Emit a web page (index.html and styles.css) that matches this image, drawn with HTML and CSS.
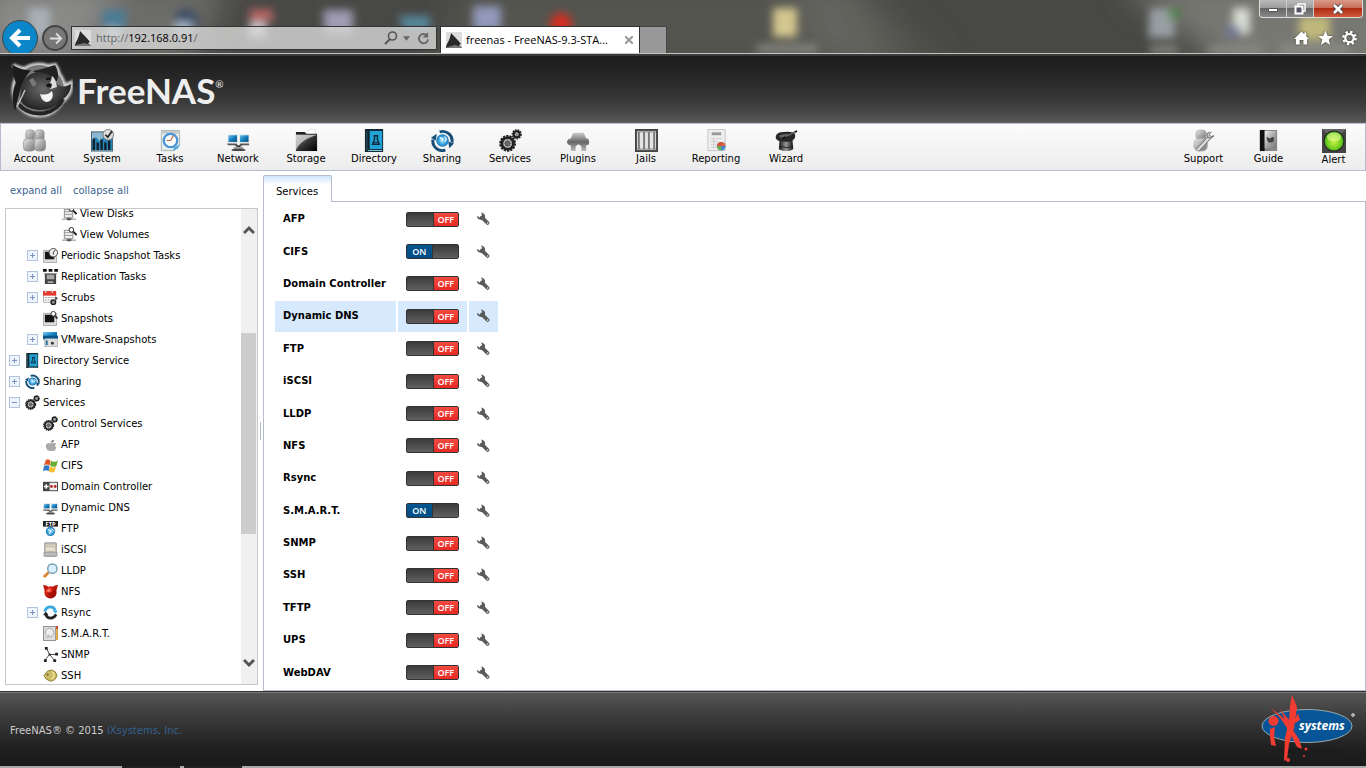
FILE: index.html
```html
<!DOCTYPE html>
<html lang="en">
<head>
<meta charset="utf-8">
<title>freenas - FreeNAS-9.3-STABLE</title>
<link rel="stylesheet" href="styles.css">
</head>
<body>
<svg class="defs" aria-hidden="true">
  <defs>
    <linearGradient id="silver" x1="0" y1="0" x2="1" y2="1"><stop offset="0" stop-color="#eee"/><stop offset=".5" stop-color="#aaa"/><stop offset="1" stop-color="#777"/></linearGradient>
    <linearGradient id="screen" x1="0" y1="0" x2="1" y2="1"><stop offset="0" stop-color="#7cc8f2"/><stop offset=".5" stop-color="#1580c0"/><stop offset="1" stop-color="#0a4670"/></linearGradient>
    <linearGradient id="coal" x1="0" y1="0" x2="1" y2="1"><stop offset="0" stop-color="#aaa"/><stop offset=".5" stop-color="#333"/><stop offset="1" stop-color="#000"/></linearGradient>
    <linearGradient id="plug" x1="0" y1="0" x2="0" y2="1"><stop offset="0" stop-color="#ccc"/><stop offset=".5" stop-color="#666"/><stop offset="1" stop-color="#bbb"/></linearGradient>
    <linearGradient id="hat" x1="0" y1="0" x2="1" y2="0"><stop offset="0" stop-color="#111"/><stop offset=".5" stop-color="#999"/><stop offset="1" stop-color="#111"/></linearGradient>
    <radialGradient id="lamp" cx=".5" cy=".55" r=".6"><stop offset="0" stop-color="#c8f040"/><stop offset=".6" stop-color="#70d020"/><stop offset="1" stop-color="#2a8a18"/></radialGradient>
    <radialGradient id="globe"><stop offset="0" stop-color="#c5ecff"/><stop offset=".6" stop-color="#3aa5df"/><stop offset="1" stop-color="#1c76b5"/></radialGradient>
    <radialGradient id="skin" cx=".45" cy=".45" r=".6"><stop offset="0" stop-color="#6a6a6a"/><stop offset=".6" stop-color="#3c3c3c"/><stop offset="1" stop-color="#1c1c1c"/></radialGradient>
    <radialGradient id="devil" cx=".35" cy=".35" r=".7"><stop offset="0" stop-color="#ff9080"/><stop offset=".4" stop-color="#e02010"/><stop offset="1" stop-color="#8c0800"/></radialGradient>
  </defs>
  <symbol id="shark" viewBox="0 0 16 16"><path d="M0 15C1 11 4 8 5 1C8 4 12 8 15 12L13 13L16 16H0Z" fill="#292929"/><path d="M1 15L9 13L16 15V16H0Z" fill="#777"/></symbol>
  <symbol id="account" viewBox="0 0 24 24"><g fill="url(#silver)" stroke="#888" stroke-width=".7"><rect x="3" y="1" width="9" height="11" rx="3"/><rect x="13" y="1" width="9" height="11" rx="3"/><rect x="0.5" y="10" width="12" height="13" rx="4"/><rect x="12" y="10" width="11.500" height="13" rx="4"/></g></symbol>
  <symbol id="system" viewBox="0 0 24 24"><rect x=".5" y="3" width="22" height="20" fill="#8db8d1" stroke="#46606e"/><path d="M1 12L5 8L9 13L14 7L18 12L22 10V22H1Z" fill="#2786b9"/><path d="M3 22V10M7 22V14M11 22V11M15 22V14M19 22V12" stroke="#12202b" stroke-width="2.500"/><circle cx="18" cy="6" r="5.500" fill="#ddd" stroke="#777"/><path d="M15 6L17.500 8.500L22 2" fill="none" stroke="#222" stroke-width="1.800"/></symbol>
  <symbol id="tasks" viewBox="0 0 24 24"><path d="M2.500 1.500H21.500V17L16 22.500H2.500Z" fill="#e8eeee" stroke="#aab4b4"/><path d="M2 2H22V5H2Z" fill="#c5cccc"/><circle cx="12" cy="12" r="7" fill="#fff" stroke="#4a94d5" stroke-width="2.400"/><path d="M12 12L15 7M12 12H8" stroke="#b5623a" stroke-width="1.300"/><path d="M22 16L20 20L14 23L16 19Z" fill="#55a6d7"/></symbol>
  <symbol id="network" viewBox="0 0 24 24"><rect x="1" y="6" width="10" height="8" fill="url(#screen)" stroke="#eee"/><rect x="13" y="6" width="10" height="8" fill="url(#screen)" stroke="#eee"/><path d="M0 15H10L12 18H9L8 17H1ZM14 15H23V17H16L15 18H12Z" fill="#555"/><path d="M7 19H17V23H7Z" fill="#888"/><path d="M5 22H19M10 18H14" stroke="#333" stroke-width="1.500"/></symbol>
  <symbol id="storage" viewBox="0 0 24 24"><path d="M12 4L14 1L21 0V6H12Z" fill="#fff" stroke="#ccc" stroke-width=".6"/><path d="M1 3H10L12 5H23V23H1Z" fill="#222"/><path d="M1 6H23V23H1Z" fill="url(#coal)"/><path d="M1 6H23C14 9 5 13 1 22Z" fill="#ddd" opacity=".75"/></symbol>
  <symbol id="directory" viewBox="0 0 24 24"><path d="M2 0H21V24H2Z" fill="#10252f"/><path d="M7 2H20V21H7Z" fill="#22a3d5"/><path d="M5 22H20V23H5Z" fill="#8dd2ea"/><path d="M4 2V22" stroke="#35586a"/><path d="M11 7H16M12 7V11L10 16H17L15 11V7" fill="none" stroke="#102b3d" stroke-width="1.500"/><path d="M11 14H16" stroke="#102b3d"/></symbol>
  <symbol id="sharing" viewBox="0 0 24 24"><circle cx="12" cy="12" r="6.500" fill="url(#globe)"/><path d="M9 9L12 10L11 12M14 8L16 10L15 13" fill="none" stroke="#fff" stroke-width="1.200"/><path d="M9 3A10 10 0 0 1 22 14M15 22A10 10 0 0 1 2 11" fill="none" stroke="#154f78" stroke-width="3"/><path d="M0 9L6 5L5 12ZM24 15L19 20L18 13Z" fill="#154f78"/></symbol>
  <symbol id="gears" viewBox="0 0 24 24"><g fill="none" stroke="#222"><circle cx="9" cy="15" r="7.800" stroke-width="2" stroke-dasharray="2.400 1.100"/><circle cx="9" cy="15" r="6" stroke-width="3"/><circle cx="9" cy="15" r="2" stroke-width="1.500"/><path d="M9 11V19M5 15H13M6 12L12 18M12 12L6 18" stroke="#555"/><circle cx="18.500" cy="5.500" r="4.500" stroke-width="1.700" stroke-dasharray="1.700 1"/><circle cx="18.500" cy="5.500" r="3" stroke-width="2.400"/></g><circle cx="9" cy="15" r="4.500" fill="#777" opacity=".5"/><circle cx="18.500" cy="5.500" r="2" fill="#999"/></symbol>
  <symbol id="plugins" viewBox="0 0 24 24"><path d="M6 5Q6 4 8 4H16Q18 4 18 5L20 10H22Q24 13 23 16Q22 17 20 17V23H15V18L12 16L9 18V23H4V17Q1 17 0 14Q0 11 3 10H4Z" fill="url(#plug)"/></symbol>
  <symbol id="jails" viewBox="0 0 24 24"><rect x="1" y="1" width="22" height="22" fill="#e4e4e4" stroke="#444" stroke-width="2"/><path d="M2 3H22M2 21H22" stroke="#999" stroke-width="1.500"/><path d="M4 3V21M9.500 3V21M14.500 3V21M20 3V21" stroke="#777" stroke-width="2"/></symbol>
  <symbol id="reporting" viewBox="0 0 24 24"><path d="M3 .500H21V22.500H3Z" fill="#eee" stroke="#c5c5c5"/><path d="M7 5H17" stroke="#999" stroke-width="3"/><path d="M6 10H18M6 13H14M6 16H13M6 19H13M9 9V20" stroke="#d0d0d0"/><circle cx="17" cy="18" r="4.500" fill="#3488d8"/><path d="M17 18V13.500A4.500 4.500 0 0 0 12.500 18Z" fill="#e34b2c"/><path d="M17 18V13.500A4.500 4.500 0 0 1 21.500 18Z" fill="#e3623c"/><path d="M17 18H12.500A4.500 4.500 0 0 0 17 22.500Z" fill="#69b44b"/></symbol>
  <symbol id="wizard" viewBox="0 0 24 24"><path d="M5 9H18L19 21Q12 25 4 21Z" fill="url(#hat)"/><path d="M1 7Q2 3 9 3Q20 2 21 6Q22 11 16 13Q7 14 3 12Q0 10 1 7Z" fill="#282828"/><path d="M4 7Q10 4 18 6Q14 9 6 9Z" fill="#666"/><path d="M5 18Q12 21 19 18" stroke="#222" fill="none"/><path d="M8 10L23 2" stroke="#111" stroke-width="1.800"/><path d="M11 8L21 3" stroke="#ccc" stroke-width=".7"/></symbol>
  <symbol id="support" viewBox="0 0 24 24"><g fill="url(#silver)" stroke="#aaa" stroke-width=".7"><rect x="4" y="1" width="11" height="10" rx="4"/><rect x="2" y="10" width="14" height="13" rx="5"/></g><path d="M6 22L19 8" stroke="#666" stroke-width="4"/><path d="M6 22L19 8" stroke="#ddd" stroke-width="2.500"/><path d="M18 3Q14 5 17 9Q20 11 23 7L20 8L18 6L20 3" fill="#ccc" stroke="#666"/></symbol>
  <symbol id="guide" viewBox="0 0 24 24"><path d="M3 1H21V23H3Z" fill="#888"/><path d="M3 1H8V23H3Z" fill="#111"/><path d="M8 2H20V20H8Z" fill="url(#silver)"/><path d="M10 8L13 10L17 8Q19 12 16 14H12Q10 12 10 8Z" fill="#444"/></symbol>
  <symbol id="alert" viewBox="0 0 24 24"><rect width="24" height="24" fill="#444"/><path d="M0 0H24L20 4H4Z" fill="#666"/><circle cx="12" cy="12" r="10.500" fill="#222"/><circle cx="12" cy="12" r="9.500" fill="url(#lamp)"/><ellipse cx="12" cy="8" rx="7" ry="4.500" fill="#eaff9a" opacity=".6"/></symbol>
  <symbol id="disk" viewBox="0 0 16 16"><path d="M2.500 3.500H11.500V12.500H2.500Z" fill="#eee" stroke="#888"/><path d="M3 6H11M3 9H11" stroke="#999"/><path d="M0 14H15M7.500 12V16" stroke="#888"/><path d="M5 14H10" stroke="#555" stroke-width="2"/><circle cx="10" cy="3" r="2.500" fill="#fff" stroke="#222"/><path d="M12 5L15.500 8.500" stroke="#222" stroke-width="2"/></symbol>
  <symbol id="snap" viewBox="0 0 16 16"><path d="M.5 2.500H14.500V15.500H.5Z" fill="#ddd" stroke="#aaa"/><path d="M2 4H12V12H2Z" fill="#181414"/></symbol>
  <symbol id="periodic" viewBox="0 0 16 16"><use href="#snap"/><circle cx="11" cy="5" r="4.500" fill="#eee" stroke="#444"/><path d="M11 5L13 2M11 5V7" stroke="#222"/></symbol>
  <symbol id="snapshot" viewBox="0 0 16 16"><use href="#snap"/><circle cx="11" cy="3" r="2.500" fill="#fff" stroke="#333"/><path d="M12.500 5L15.500 8" stroke="#333" stroke-width="2"/></symbol>
  <symbol id="replication" viewBox="0 0 16 16"><path d="M0 0H4V3H0ZM6 0H10V3H6ZM12 0H16V3H12Z" fill="#111"/><path d="M2 5H14V16H2Z" fill="#444"/><path d="M4 6H12V11H4ZM5 13H11V15H5Z" fill="#aaa"/><path d="M1 5H15" stroke="#888"/></symbol>
  <symbol id="scrubs" viewBox="0 0 16 16"><path d="M.5 2H13.500V13H.5Z" fill="#fff" stroke="#aaa"/><path d="M0 1H14V6H0Z" fill="#e43b30"/><path d="M3 0V3M10 0V3" stroke="#ddd" stroke-width="1.500"/><path d="M2 8H12M2 10.500H10" stroke="#999" stroke-dasharray="2 1"/><circle cx="11" cy="13" r="2.500" fill="#888" stroke="#222" stroke-width="1.500"/><circle cx="14" cy="9" r="1.500" fill="#555"/></symbol>
  <symbol id="vmware" viewBox="0 0 16 16"><path d="M0 0H15V8H0Z" fill="url(#screen)"/><path d="M2 6H16V16H2Z" fill="#ddd" stroke="#888" stroke-width=".7"/><path d="M0 4H16V7H0Z" fill="#0b5689"/><circle cx="10" cy="12" r="1.500" fill="#333"/><path d="M4 9V14" stroke="#2671a1" stroke-width="2"/></symbol>
  <symbol id="apple" viewBox="0 0 16 16"><path d="M8 7Q4 5 3 9Q3 14 7 15H12Q14 13 14 11Q12 10 14 7Q11 5 8 7Z" fill="#aaa"/><path d="M8 6Q9 3 12 3Q12 6 8 6Z" fill="#888"/></symbol>
  <symbol id="windows" viewBox="0 0 16 16"><path d="M3 2Q6 0 8 3L7 8Q4 6 1 8Z" fill="#e15523"/><path d="M8.500 3Q12 5 16 3L14 9Q10 10 7.500 8Z" fill="#69ae37"/><path d="M1 8.500Q4 7 7 8.500L6 14Q3 12 0 14Z" fill="#3177c7"/><path d="M7.500 9Q10 11 14 9.500L12 15Q9 16 6 14Z" fill="#f5bd31"/></symbol>
  <symbol id="controller" viewBox="0 0 16 16"><path d="M0 3H16V13H0Z" fill="#444"/><path d="M7 4H15V12H7Z" fill="#eee"/><path d="M1 8H6M3.500 5.500V10.500" stroke="#fff" stroke-width="1.600"/><circle cx="9" cy="8" r="1.500" fill="#b52b28"/><circle cx="13" cy="8" r="1.500" fill="#b52b28"/></symbol>
  <symbol id="iscsi" viewBox="0 0 16 16"><path d="M2 1H14V15H2Z" fill="#e5e2d5" stroke="#777"/><path d="M3 3H13M3 5H13M4 10H12" stroke="#bbb49a"/><path d="M1 11H15V15H1Z" fill="#bbb" stroke="#777" stroke-width=".5"/></symbol>
  <symbol id="lens" viewBox="0 0 16 16"><path d="M1 15L6 10" stroke="#dd8330" stroke-width="3"/><circle cx="10" cy="6" r="5" fill="#d7efff" stroke="#779fb5" stroke-width="1.500"/></symbol>
  <symbol id="bsd" viewBox="0 0 16 16"><circle cx="8" cy="9" r="6.500" fill="url(#devil)"/><path d="M0 1Q5 1 6 4L2 8ZM16 1Q11 1 10 4L14 8Z" fill="#b91a0e"/><path d="M4 8Q8 11 14 4Q14 10 9 13Q5 12 4 8Z" fill="#8c0800" opacity=".6"/></symbol>
  <symbol id="rsync" viewBox="0 0 16 16"><path d="M2 7Q3 2 8 2Q12 2 13 6" fill="none" stroke="#39a9e4" stroke-width="3"/><path d="M10 6H16L13.500 9Z" fill="#39a9e4"/><path d="M3 10Q4 14 8 14Q12 14 14 10" fill="none" stroke="#222" stroke-width="2.800"/><path d="M0 11L3 7L6 11Z" fill="#222"/></symbol>
  <symbol id="smart" viewBox="0 0 16 16"><path d="M.5 .500H13.500V15.500H.5Z" fill="#ddd" stroke="#888"/><circle cx="7" cy="7" r="4.500" fill="#eee" stroke="#aaa"/><path d="M3 13L7 9" stroke="#aaa"/><path d="M15 1V15" stroke="#dd9b28" stroke-width="1.800"/><path d="M15 0V3" stroke="#c3332b" stroke-width="1.800"/></symbol>
  <symbol id="snmp" viewBox="0 0 16 16"><path d="M4 2L7 8L2 14M7 8H14M7 8L12 14" fill="none" stroke="#444"/><path d="M2 0H5V3H2ZM13 6H16V9H13ZM1 13H4V16H1ZM11 13H14V16H11ZM6 7H8V9H6Z" fill="#222"/></symbol>
  <symbol id="ssh" viewBox="0 0 16 16"><path d="M1 8Q4 2 9 2Q14 3 15 8Q13 14 8 14Q3 13 1 8Z" fill="#cbbb61" stroke="#8a7c3a"/><path d="M10 4Q14 8 9 12" fill="none" stroke="#f3e9a6" stroke-width="1.400"/><circle cx="5" cy="7" r="1" fill="#444"/></symbol>
  <symbol id="wrench" viewBox="0 0 16 16"><path d="M6 6L13 13" stroke="#5a5a5a" stroke-width="4.500" stroke-linecap="round"/><path d="M5 0Q10 1 10 5Q9 10 4 9Q0 8 0 4L3 6L6 5L6 2Z" fill="#5a5a5a"/><circle cx="13" cy="13" r="1" fill="#ddd"/></symbol>
</svg>

<div class="chrome">
  <svg class="wallpaper" viewBox="0 0 1366 54" preserveAspectRatio="xMinYMin slice" aria-hidden="true">
    <filter id="soft" x="-.5" y="-.5" width="2" height="2"><feGaussianBlur stdDeviation="4"/></filter>
    <filter id="wide" x="-.5" y="-.5" width="2" height="2"><feGaussianBlur stdDeviation="16"/></filter>
    <g filter="url(#wide)"><path d="M-20 -20H130L80 70H-20Z" fill="#8a8a88"/><path d="M120 -20H230L190 70H100Z" fill="#6c6c68"/><path d="M470 -20H860L950 70H430Z" fill="#54544f"/><path d="M780 -20H850L900 70H820Z" fill="#63635f"/><path d="M1120 -20H1400V80H1240Z" fill="#787873"/></g>
    <g filter="url(#soft)"><path d="M28 8H50V38H30Z" fill="#a9b0b6"/><path d="M102 10H126V30H104Z" fill="#4c7c96"/><path d="M106 28H120V40H106Z" fill="#b4c4cc"/><circle cx="186" cy="21" r="12" fill="#3b4a66"/><path d="M174 22H192V34H174Z" fill="#a4b4c4"/><path d="M249 9H273V22H250Z" fill="#b26462"/><path d="M250 22H266V38H248Z" fill="#c4c4c8"/><path d="M323 10H353V34H325Z" fill="#9f9cb4"/><path d="M398 16H430V30H404Z" fill="#56889e"/><path d="M473 6H501V30H473Z" fill="#9299bb"/><circle cx="561" cy="24" r="11" fill="#d12f24"/><path d="M773 8H797V37H773Z" fill="#d4c890"/><path d="M1150 8H1175V38H1148Z" fill="#989ea3"/><circle cx="1174" cy="14" r="6" fill="#4e8b42"/><path d="M1233 8H1250V34H1233Z" fill="#d9ddd2"/><path d="M1226 26H1240V36H1226Z" fill="#6d779d"/><path d="M1299 16H1330V40H1299Z" fill="#bfb87c"/><path d="M757 45H817V52H757ZM1150 46H1178V53H1150ZM1208 46H1262V53H1208ZM1280 45H1350V53H1280Z" fill="#8d8d88"/></g>
  </svg>
  <div class="nav-buttons">
    <button class="back" aria-label="Back"><svg viewBox="0 0 24 24"><path d="M22 12H5M12 4L4 12L12 20" fill="none" stroke="#fff" stroke-width="4"/></svg></button>
    <button class="forward" aria-label="Forward"><svg viewBox="0 0 24 24"><path d="M3 12H20M13 4L21 12L13 20" fill="none" stroke="#ddd" stroke-width="3"/></svg></button>
  </div>
  <div class="address">
    <svg class="favicon"><use href="#shark"/></svg>
    <a class="url" href="#">http://<span class="host">192.168.0.91</span>/</a>
    <button aria-label="Search"><svg viewBox="0 0 14 14" width="14" height="14"><circle cx="8.500" cy="5" r="4" fill="none" stroke="#555" stroke-width="1.600"/><path d="M6 8L1 13" stroke="#555" stroke-width="2"/></svg></button>
    <button aria-label="Show address history"><svg viewBox="0 0 8 5" width="7" height="5"><path d="M0 0H8L4 5Z" fill="#666"/></svg></button>
    <button class="reload" aria-label="Refresh"><svg viewBox="0 0 14 14" width="13" height="13"><path d="M11 4A5 5 0 1 0 12 8" fill="none" stroke="#666" stroke-width="2"/><path d="M12 0V6H6Z" fill="#666"/></svg></button>
  </div>
  <div class="browser-tab">
    <svg class="favicon"><use href="#shark"/></svg>
    <span class="browser-tab-title">freenas - FreeNAS-9.3-STA...</span>
    <button aria-label="Close tab"><svg viewBox="0 0 8 8" width="8" height="8"><path d="M0 0L8 8M8 0L0 8" stroke="#999" stroke-width="2"/></svg></button>
  </div>
  <button class="new-tab" aria-label="New tab"></button>
  <div class="window-side">
    <div class="window-buttons">
      <button aria-label="Minimize"><svg viewBox="0 0 12 12" width="12" height="12"><path d="M1.500 5.500H10.500V8.500H1.500Z" fill="#fff" stroke="#555"/></svg></button>
      <button aria-label="Restore"><svg viewBox="0 0 12 12" width="12" height="12"><path d="M4 1H11V8H4Z" fill="#777" stroke="#fff" stroke-width="1.500"/><path d="M1.500 3.500H8.500V10.500H1.500Z" fill="#556" stroke="#fff" stroke-width="2"/></svg></button>
      <button class="close" aria-label="Close"><svg viewBox="0 0 12 12" width="12" height="12"><path d="M2 2L10 10M10 2L2 10" stroke="#445" stroke-width="4.500"/><path d="M2 2L10 10M10 2L2 10" stroke="#fff" stroke-width="2.500"/></svg></button>
    </div>
    <div class="tools">
      <button aria-label="Home"><svg viewBox="0 0 16 16"><path d="M8 1L0 9H2V15H6V10H10V15H14V9H16L13 6V2H11V4Z" fill="#fff"/></svg></button>
      <button aria-label="Favorites"><svg viewBox="0 0 16 16"><path d="M8 0L10.200 5.500L16 6L11.500 9.700L13 15.500L8 12.200L3 15.500L4.500 9.700L0 6L5.800 5.500Z" fill="#fff"/></svg></button>
      <button aria-label="Tools"><svg viewBox="0 0 16 16"><circle cx="8" cy="8" r="4.500" fill="none" stroke="#fff" stroke-width="2.400"/><circle cx="8" cy="8" r="6.500" fill="none" stroke="#fff" stroke-width="2.600" stroke-dasharray="2.500 2.600"/></svg></button>
    </div>
  </div>
</div>

<header class="masthead">
  <svg class="mark" viewBox="0 0 64 60" aria-hidden="true">
    <filter id="glow" x="-.2" y="-.2" width="1.4" height="1.4"><feGaussianBlur stdDeviation="1"/></filter>
    <g fill="none" stroke="#d0d0d0" stroke-width="4" filter="url(#glow)"><circle cx="30" cy="30" r="25.500"/><path d="M4 5Q13 10 24 9L46 5Q51 12 50 21Q56 27 62 23Q63 34 53 42"/></g>
    <circle cx="30" cy="30" r="25" fill="#777"/>
    <path d="M4 5Q13 11 22 10Q14 18 9 38L6 51Q1 34 7 23Q3 14 4 5Z" fill="#1b1b1b"/>
    <path d="M24 11Q34 9 46 5Q51 13 48 21L34 18Z" fill="#222"/>
    <path d="M12 26Q17 13 30 12Q43 13 48 24Q54 29 62 24Q62 34 53 40Q45 50 30 50Q16 49 11 40Z" fill="url(#skin)"/>
    <path d="M9 44Q20 56 36 53Q49 50 54 39" fill="none" stroke="#242424" stroke-width="4"/>
    <path d="M43 16Q47 19 48 27L42 29L38 26Q42 24 43 16Z" fill="#ddd"/>
    <path d="M37 18L42 17L41 20H37ZM37 25Q40 22 43 24L42 28L38 27Z" fill="#151515"/>
    <path d="M31 34Q38 36 43 31Q46 40 38 42Q33 42 31 34Z" fill="#f4f4f4"/>
    <path d="M20 20L24 18L28 24L24 27Z" fill="#777"/><path d="M8 47L16 30" stroke="#ccc" stroke-width="1.300"/>
  </svg>
  <span class="wordmark">FreeNAS<sup>®</sup></span>
</header>

<nav class="toolbar">
  <button><svg><use href="#account"/></svg>Account</button>
  <button><svg><use href="#system"/></svg>System</button>
  <button><svg><use href="#tasks"/></svg>Tasks</button>
  <button><svg><use href="#network"/></svg>Network</button>
  <button><svg><use href="#storage"/></svg>Storage</button>
  <button><svg><use href="#directory"/></svg>Directory</button>
  <button><svg><use href="#sharing"/></svg>Sharing</button>
  <button><svg><use href="#gears"/></svg>Services</button>
  <button><svg><use href="#plugins"/></svg>Plugins</button>
  <button><svg><use href="#jails"/></svg>Jails</button>
  <button class="roomy"><svg><use href="#reporting"/></svg>Reporting</button>
  <button><svg><use href="#wizard"/></svg>Wizard</button>
  <div class="toolbar-end">
    <button><svg><use href="#support"/></svg>Support</button>
    <button><svg><use href="#guide"/></svg>Guide</button>
    <button class="alert"><svg><use href="#alert"/></svg>Alert</button>
  </div>
</nav>

<main class="workspace">
  <aside class="sidebar">
    <div class="tree-actions"><a href="#">expand all</a><a href="#">collapse all</a></div>
    <div class="tree-box">
      <ul class="tree">
        <li class="level-3"><svg><use href="#disk"/></svg>View Disks</li>
        <li class="level-3"><svg><use href="#disk"/></svg>View Volumes</li>
        <li class="level-2"><button class="expander" aria-label="Expand Periodic Snapshot Tasks"></button><svg><use href="#periodic"/></svg>Periodic Snapshot Tasks</li>
        <li class="level-2"><button class="expander" aria-label="Expand Replication Tasks"></button><svg><use href="#replication"/></svg>Replication Tasks</li>
        <li class="level-2"><button class="expander" aria-label="Expand Scrubs"></button><svg><use href="#scrubs"/></svg>Scrubs</li>
        <li class="level-2 leaf"><svg><use href="#snapshot"/></svg>Snapshots</li>
        <li class="level-2"><button class="expander" aria-label="Expand VMware-Snapshots"></button><svg><use href="#vmware"/></svg>VMware-Snapshots</li>
        <li><button class="expander" aria-label="Expand Directory Service"></button><svg><use href="#directory"/></svg>Directory Service</li>
        <li><button class="expander" aria-label="Expand Sharing"></button><svg><use href="#sharing"/></svg>Sharing</li>
        <li><button class="expander open" aria-label="Collapse Services"></button><svg><use href="#gears"/></svg>Services</li>
        <li class="level-2 leaf"><svg><use href="#gears"/></svg>Control Services</li>
        <li class="level-2 leaf"><svg><use href="#apple"/></svg>AFP</li>
        <li class="level-2 leaf"><svg><use href="#windows"/></svg>CIFS</li>
        <li class="level-2 leaf"><svg><use href="#controller"/></svg>Domain Controller</li>
        <li class="level-2 leaf"><svg><use href="#network"/></svg>Dynamic DNS</li>
        <li class="level-2 leaf"><svg viewBox="0 0 16 16"><circle cx="8" cy="11" r="5" fill="url(#globe)"/><path d="M5 9L8 10L7 14M9 8L12 11" stroke="#fff" fill="none"/><path d="M0 0H16V6H0Z" fill="#222"/><text x="8" y="5" class="icon-text" text-anchor="middle">FTP</text></svg>FTP</li>
        <li class="level-2 leaf"><svg><use href="#iscsi"/></svg>iSCSI</li>
        <li class="level-2 leaf"><svg><use href="#lens"/></svg>LLDP</li>
        <li class="level-2 leaf"><svg><use href="#bsd"/></svg>NFS</li>
        <li class="level-2"><button class="expander" aria-label="Expand Rsync"></button><svg><use href="#rsync"/></svg>Rsync</li>
        <li class="level-2 leaf"><svg><use href="#smart"/></svg>S.M.A.R.T.</li>
        <li class="level-2 leaf"><svg><use href="#snmp"/></svg>SNMP</li>
        <li class="level-2 leaf"><svg><use href="#ssh"/></svg>SSH</li>
      </ul>
      <div class="scrollbar">
        <button aria-label="Scroll up"><svg viewBox="0 0 12 10"><path d="M1 8L6 3L11 8" fill="none" stroke="#555" stroke-width="3"/></svg></button>
        <div class="track"><div class="thumb"></div></div>
        <button aria-label="Scroll down"><svg viewBox="0 0 12 10"><path d="M1 2L6 7L11 2" fill="none" stroke="#555" stroke-width="3"/></svg></button>
      </div>
    </div>
  </aside>
  <div class="splitter"><span></span></div>
  <section class="content">
    <div class="tabs"><button class="tab">Services</button></div>
    <div class="panel">
      <table class="services">
        <tbody>
          <tr><th scope="row">AFP</th><td><label class="switch"><input type="checkbox" aria-label="AFP"><span class="on">ON</span><span class="off">OFF</span></label></td><td><button class="settings" aria-label="AFP settings"><svg><use href="#wrench"/></svg></button></td></tr>
          <tr><th scope="row">CIFS</th><td><label class="switch"><input type="checkbox" aria-label="CIFS" checked><span class="on">ON</span><span class="off">OFF</span></label></td><td><button class="settings" aria-label="CIFS settings"><svg><use href="#wrench"/></svg></button></td></tr>
          <tr><th scope="row">Domain Controller</th><td><label class="switch"><input type="checkbox" aria-label="Domain Controller"><span class="on">ON</span><span class="off">OFF</span></label></td><td><button class="settings" aria-label="Domain Controller settings"><svg><use href="#wrench"/></svg></button></td></tr>
          <tr class="highlighted"><th scope="row">Dynamic DNS</th><td><label class="switch"><input type="checkbox" aria-label="Dynamic DNS"><span class="on">ON</span><span class="off">OFF</span></label></td><td><button class="settings" aria-label="Dynamic DNS settings"><svg><use href="#wrench"/></svg></button></td></tr>
          <tr><th scope="row">FTP</th><td><label class="switch"><input type="checkbox" aria-label="FTP"><span class="on">ON</span><span class="off">OFF</span></label></td><td><button class="settings" aria-label="FTP settings"><svg><use href="#wrench"/></svg></button></td></tr>
          <tr><th scope="row">iSCSI</th><td><label class="switch"><input type="checkbox" aria-label="iSCSI"><span class="on">ON</span><span class="off">OFF</span></label></td><td><button class="settings" aria-label="iSCSI settings"><svg><use href="#wrench"/></svg></button></td></tr>
          <tr><th scope="row">LLDP</th><td><label class="switch"><input type="checkbox" aria-label="LLDP"><span class="on">ON</span><span class="off">OFF</span></label></td><td><button class="settings" aria-label="LLDP settings"><svg><use href="#wrench"/></svg></button></td></tr>
          <tr><th scope="row">NFS</th><td><label class="switch"><input type="checkbox" aria-label="NFS"><span class="on">ON</span><span class="off">OFF</span></label></td><td><button class="settings" aria-label="NFS settings"><svg><use href="#wrench"/></svg></button></td></tr>
          <tr><th scope="row">Rsync</th><td><label class="switch"><input type="checkbox" aria-label="Rsync"><span class="on">ON</span><span class="off">OFF</span></label></td><td><button class="settings" aria-label="Rsync settings"><svg><use href="#wrench"/></svg></button></td></tr>
          <tr><th scope="row">S.M.A.R.T.</th><td><label class="switch"><input type="checkbox" aria-label="S.M.A.R.T." checked><span class="on">ON</span><span class="off">OFF</span></label></td><td><button class="settings" aria-label="S.M.A.R.T. settings"><svg><use href="#wrench"/></svg></button></td></tr>
          <tr><th scope="row">SNMP</th><td><label class="switch"><input type="checkbox" aria-label="SNMP"><span class="on">ON</span><span class="off">OFF</span></label></td><td><button class="settings" aria-label="SNMP settings"><svg><use href="#wrench"/></svg></button></td></tr>
          <tr><th scope="row">SSH</th><td><label class="switch"><input type="checkbox" aria-label="SSH"><span class="on">ON</span><span class="off">OFF</span></label></td><td><button class="settings" aria-label="SSH settings"><svg><use href="#wrench"/></svg></button></td></tr>
          <tr><th scope="row">TFTP</th><td><label class="switch"><input type="checkbox" aria-label="TFTP"><span class="on">ON</span><span class="off">OFF</span></label></td><td><button class="settings" aria-label="TFTP settings"><svg><use href="#wrench"/></svg></button></td></tr>
          <tr><th scope="row">UPS</th><td><label class="switch"><input type="checkbox" aria-label="UPS"><span class="on">ON</span><span class="off">OFF</span></label></td><td><button class="settings" aria-label="UPS settings"><svg><use href="#wrench"/></svg></button></td></tr>
          <tr><th scope="row">WebDAV</th><td><label class="switch"><input type="checkbox" aria-label="WebDAV"><span class="on">ON</span><span class="off">OFF</span></label></td><td><button class="settings" aria-label="WebDAV settings"><svg><use href="#wrench"/></svg></button></td></tr>
        </tbody>
      </table>
    </div>
  </section>
</main>

<footer class="footer">
  <span>FreeNAS® © 2015 <a href="#">iXsystems, Inc.</a></span>
  <svg class="vendor" viewBox="0 0 96 70" role="img" aria-label="iXsystems">
    <ellipse cx="50" cy="57" rx="32" ry="3" fill="#1c1c1c"/>
    <ellipse cx="47" cy="32" rx="45" ry="16.500" fill="#075596" stroke="#9aa" stroke-width="1"/>
    <g fill="#f23c32"><circle cx="13.500" cy="27" r="5"/><path d="M10 35L15 33L14 43L16 52L11 51L10 42Z"/><path d="M32 1L37 13L34 34L29 50L27 65L24 67L25 44L29 26L30 12Z"/><path d="M10 13L26 26L39 45L42 55L37 53L29 37L21 25Z"/><path d="M20 15L30 27L27 30ZM38 19L40 26L32 31Z"/><circle cx="46" cy="55" r="1.500"/><circle cx="44" cy="62" r="1"/><circle cx="28" cy="66" r="2"/></g>
    <text x="39" y="36" class="vendor-text">systems</text>
    <circle cx="93" cy="21" r="1.500" fill="#aaa" stroke="#ddd" stroke-width=".6"/>
  </svg>
</footer>
<div class="taskbar"><span></span><span></span></div>
</body>
</html>
```
FILE: styles.css
```css
* { box-sizing: border-box; }

body {
  margin: 0;
  height: 100vh;
  display: flex;
  flex-direction: column;
  font: 10px/14px "DejaVu Sans", Verdana, sans-serif;
  color: #000;
  background: #fff;
  overflow: hidden;
}

button {
  margin: 0;
  padding: 0;
  border: 0;
  background: none;
  font: inherit;
  color: inherit;
}

a { text-decoration: none; }
svg { display: block; flex: none; }
.defs { position: absolute; width: 0; height: 0; }
.icon-text { font: bold 6px "Open Sans", sans-serif; fill: #fff; }

/* Browser window frame */
.chrome {
  position: relative;
  flex: none;
  height: 54px;
  display: flex;
  align-items: flex-end;
  background: #484845;
  border-bottom: 1px solid #c5c5c5;
  overflow: hidden;
  font: 12px/16px "Open Sans", "Noto Sans", sans-serif;
}
.wallpaper { position: absolute; inset: 0; width: 100%; height: 100%; }
.nav-buttons, .address, .browser-tab, .new-tab, .window-side { position: relative; }
.nav-buttons { display: flex; align-items: center; gap: 4px; width: 71px; padding-left: 2px; margin-bottom: -3px; }
.back, .forward { display: grid; place-items: center; border-radius: 50%; flex: none; }
.back { width: 36px; height: 36px; background: #0b86c8; border: 1px solid #444; }
.back svg { width: 24px; height: 24px; }
.forward { width: 26px; height: 26px; background: #777; border: 2px solid #444; }
.forward svg { width: 15px; height: 15px; }
.address {
  flex: 0 1 366px;
  height: 24px;
  margin-bottom: 3px;
  padding: 0 6px 0 3px;
  display: flex;
  align-items: center;
  gap: 5px;
  background: #d8d8d8cc;
  border: 1px solid #333;
}
.favicon { width: 16px; height: 16px; background: #ddd; }
.url { flex: 1; color: #666; font-size: 11px; }
.host { color: #000; }
.reload { margin-left: 2px; }
.browser-tab {
  flex: 0 1 200px;
  height: 27px;
  margin-left: 3px;
  padding: 0 6px 0 5px;
  display: flex;
  align-items: center;
  gap: 4px;
  background: #fff;
  border: 1px solid #333;
  border-bottom: 0;
  font-size: 11px;
}
.browser-tab-title { flex: 1; white-space: nowrap; }
.new-tab { width: 27px; height: 27px; background: #999; border: 1px solid #444; border-left: 0; border-bottom: 0; }
.window-side { margin-left: auto; align-self: stretch; display: flex; flex-direction: column; align-items: flex-end; justify-content: space-between; }
.window-buttons {
  display: flex;
  height: 18px;
  margin-right: 3px;
  border: 1px solid #ddd;
  border-top: 0;
  border-radius: 0 0 4px 4px;
  background: linear-gradient(#bbb, #999 50%, #666 50%, #888);
}
.window-buttons button { width: 27px; display: grid; place-items: center; border-right: 1px solid #ccc; }
.window-buttons .close { width: 48px; border: 0; background: linear-gradient(#d99a88, #c96850 50%, #b02a10 50%, #cf5a3c); border-radius: 0 0 3px 0; }
.tools { display: flex; gap: 9px; margin: 0 9px 7px 0; filter: drop-shadow(0 0 1px #333); }
.tools svg { width: 15px; height: 16px; }

/* Product header */
.masthead {
  flex: none;
  height: 69px;
  display: flex;
  align-items: center;
  gap: 4px;
  padding: 2px 0 0 9px;
  border-top: 2px solid #3a3a3a;
  border-bottom: 1px solid #66626a;
  background: linear-gradient(#1c1c1c, #262626 30%, #3b3a3a 70%, #565656);
}
.mark { width: 64px; height: 60px; }
.wordmark { font: bold 35px/40px Lato, sans-serif; color: #eee; }
.wordmark sup { font: 10px/12px Lato, sans-serif; vertical-align: 16px; }

.toolbar {
  flex: none;
  height: 48px;
  display: flex;
  background: linear-gradient(#fcfcfc, #ececec);
  box-shadow: inset 0 0 0 1px #b5bccd;
}
.toolbar button { width: 68px; padding-top: 6px; display: flex; flex-direction: column; align-items: center; justify-content: flex-start; }
.toolbar .roomy { width: 72px; }
.toolbar svg { width: 23px; height: 23px; }
.toolbar-end { display: flex; margin-left: auto; }
.toolbar-end button { width: 65px; }
.toolbar .alert svg { width: 24px; height: 24px; }

/* Tree navigation */
.workspace { flex: 1; min-height: 0; display: flex; }
.sidebar { flex: none; width: 258px; padding: 13px 0 6px 5px; display: flex; flex-direction: column; }
.tree-actions { display: flex; gap: 11px; padding: 0 0 10px 5px; }
.tree-actions a { color: #3c6590; }
.tree-box { flex: 1; min-height: 0; display: flex; border: 1px solid #c8c8c8; overflow: hidden; }
.tree { flex: 1; margin: -6px 0 0; padding: 0; list-style: none; white-space: nowrap; }
.tree li { height: 21px; display: flex; align-items: center; padding-left: 3px; }
.tree .level-2 { padding-left: 21px; }
.tree .leaf { padding-left: 37px; }
.tree .level-3 { padding-left: 56px; }
.tree svg { width: 15px; height: 15px; margin-right: 3px; }
.expander {
  flex: none;
  width: 11px;
  height: 11px;
  margin-right: 5px;
  border: 1px solid #b2c3de;
  background: linear-gradient(#7b93bd, #7b93bd) center / 5px 1px no-repeat, linear-gradient(#7b93bd, #7b93bd) center / 1px 5px no-repeat, #eef4fb;
}
.expander.open { background: linear-gradient(#7b93bd, #7b93bd) center / 5px 1px no-repeat, #eef4fb; }
.scrollbar { width: 16px; flex: none; display: flex; flex-direction: column; background: #f0f0f0; }
.scrollbar button { height: 42px; display: grid; place-items: center; }
.scrollbar svg { width: 12px; height: 10px; }
.track { flex: 1; display: grid; grid-template-rows: 82fr 201fr 108fr; }
.thumb { grid-row: 2; background: #cdcdcd; margin-right: 1px; }
.splitter { flex: none; width: 5px; display: grid; place-items: center; }
.splitter span { width: 1px; height: 18px; background: #b5bccd; }

/* Services tab */
.content { flex: 1; min-width: 0; display: flex; flex-direction: column; padding: 4px 0 0; }
.tabs { display: flex; }
.tab {
  position: relative;
  height: 27px;
  padding: 5px 13px 0 12px;
  margin-bottom: -1px;
  border: 1px solid #b5bccd;
  border-bottom: 0;
  border-radius: 2px 2px 0 0;
  background: linear-gradient(#d0e4fa, #fff 9px);
}
.panel { flex: 1; min-height: 0; border: 1px solid #b5bccd; padding-left: 9px; }
.services { height: 100%; border-spacing: 2px; }
.services th, .services td { padding: 0 8px; height: 30px; text-align: left; vertical-align: middle; }
.services th { width: 121px; white-space: nowrap; }
.highlighted th, .highlighted td { background: #d6e9fd; }
.switch {
  position: relative;
  display: flex;
  width: 53px;
  height: 15px;
  border: 1px solid #333;
  border-radius: 2px;
  overflow: hidden;
  background: linear-gradient(#3a3a3a, #606060);
  font: 600 9px/13px "Open Sans", sans-serif;
  color: #fff;
  text-align: center;
}
.switch input { position: absolute; inset: 0; margin: 0; opacity: 0; }
.switch span { width: 50%; }
.on { visibility: hidden; }
.off { background: linear-gradient(#f34a40, #e62a24); border-left: 1px solid #333; }
.switch input:checked ~ .on { visibility: visible; background: linear-gradient(#06568e, #004d85); border-right: 1px solid #333; }
.switch input:checked ~ .off { visibility: hidden; }
.settings { display: block; }
.settings svg { width: 13px; height: 14px; }

.footer {
  flex: none;
  height: 75px;
  display: flex;
  align-items: center;
  justify-content: space-between;
  padding: 4px 10px 0 10px;
  border-top: 1px solid #333;
  color: #ccc;
  background: linear-gradient(#777 1px, #555 1px, #3b3a3a 35%, #202020 75%, #1a1a1a);
}
.footer a { color: #34608f; }
.vendor { width: 96px; height: 70px; margin-top: -4px; }
.vendor-text { font: italic bold 12px "Open Sans", sans-serif; fill: #fff; }
.taskbar { flex: none; height: 2px; display: flex; gap: 4px; padding-left: 122px; background: #aaa; }
.taskbar span { width: 58px; background: #222; }
```
